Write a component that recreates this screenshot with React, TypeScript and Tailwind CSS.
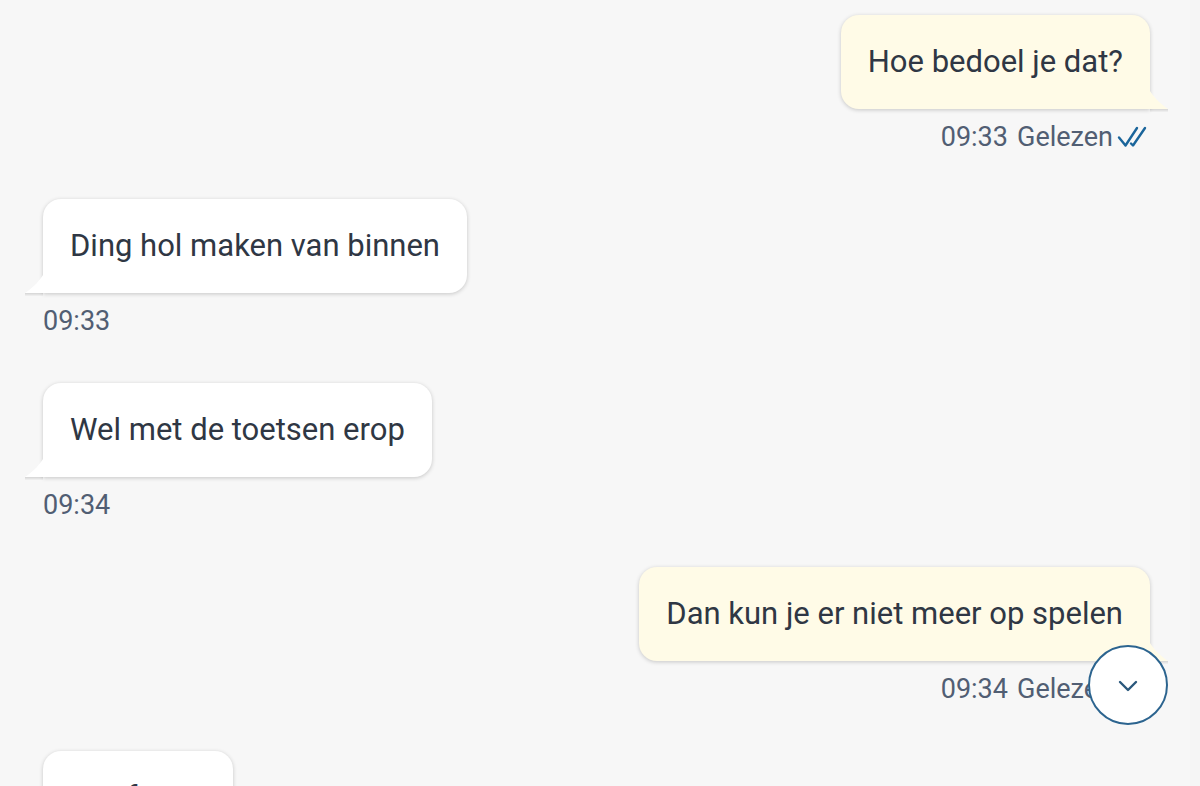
import React from 'react';
import clsx from 'clsx';

interface Message {
    id: number;
    text: string;
    time: string;
    own: boolean;
}

const messages: Message[] = [
    { id: 1, text: 'Hoe bedoel je dat?', time: '09:33', own: true },
    { id: 2, text: 'Ding hol maken van binnen', time: '09:33', own: false },
    { id: 3, text: 'Wel met de toetsen erop', time: '09:34', own: false },
    { id: 4, text: 'Dan kun je er niet meer op spelen', time: '09:34', own: true },
    { id: 5, text: 'Het foutje', time: '09:34', own: false },
];

// Little corner under the bubble, pointing outwards
const Tail: React.FC<{ own: boolean }> = ({ own }) => (
    <svg
        viewBox="0 0 18 22"
        aria-hidden="true"
        className={clsx(
            'absolute top-full -mt-[18px] w-[18px] h-[22px]',
            own ? 'left-full text-[#fffbe7]' : 'right-full text-white -scale-x-100'
        )}
    >
        <path d="M0 18H18V19H0z" fill="#000" opacity=".12" />
        <path d="M0 19H18V20H0z" fill="#000" opacity=".08" />
        <path d="M0 20H18V21H0z" fill="#000" opacity=".04" />
        <path d="M0 0C3 5 9 12 18 18H0z" fill="currentColor" />
    </svg>
);

const ReadMark: React.FC = () => (
    <svg
        viewBox="0 0 30 24"
        aria-hidden="true"
        className="w-[30px] h-6 ml-1"
        fill="none"
        stroke="#1a659b"
        strokeWidth="2.4"
        strokeLinecap="round"
        strokeLinejoin="round"
    >
        <path d="M2 12.5L8.5 20.5L20 3" />
        <path d="M14 18.5L16 20.5L28 3" />
    </svg>
);

const Bubble: React.FC<{ message: Message }> = ({ message }) => {
    const { text, time, own } = message;

    return (
        <li className={clsx('flex flex-col', own ? 'items-end' : 'items-start')}>
            <div
                className={clsx(
                    'relative px-[27px] py-[27px] rounded-[18px] text-[31px] leading-10 text-[#2f3744] shadow-[0_1px_4px_rgba(0,0,0,0.2)]',
                    own ? 'bg-[#fffbe7] rounded-br-none' : 'bg-white rounded-bl-none'
                )}
            >
                {text}
                <Tail own={own} />
            </div>
            <div className={clsx('flex items-center mt-2 text-[27px] leading-10 text-[#515e73]', own && 'mr-[3px]')}>
                <time>{time}</time>
                {own && (
                    <>
                        <span className="ml-[9px]">Gelezen</span>
                        <ReadMark />
                    </>
                )}
            </div>
        </li>
    );
};

export default function App() {
    return (
        <main className="relative h-screen overflow-hidden bg-[#f7f7f7] border-r-[10px] border-[#f5f5f5] font-[Roboto,sans-serif]">
            <ul className="flex flex-col gap-[42px] pt-[15px] pl-[43px] pr-10">
                {messages.map((message) => (
                    <Bubble key={message.id} message={message} />
                ))}
            </ul>
            <button
                type="button"
                aria-label="Naar beneden"
                className="absolute right-[22px] bottom-[61px] flex items-center justify-center size-20 rounded-full border-2 border-[#2c648f] bg-white cursor-pointer"
            >
                <svg
                    viewBox="0 0 20 14"
                    className="w-5 h-3.5"
                    fill="none"
                    stroke="#2a587c"
                    strokeWidth="2.4"
                    strokeLinecap="round"
                    strokeLinejoin="round"
                >
                    <path d="M2 4L10 12L18 4" />
                </svg>
            </button>
        </main>
    );
}
